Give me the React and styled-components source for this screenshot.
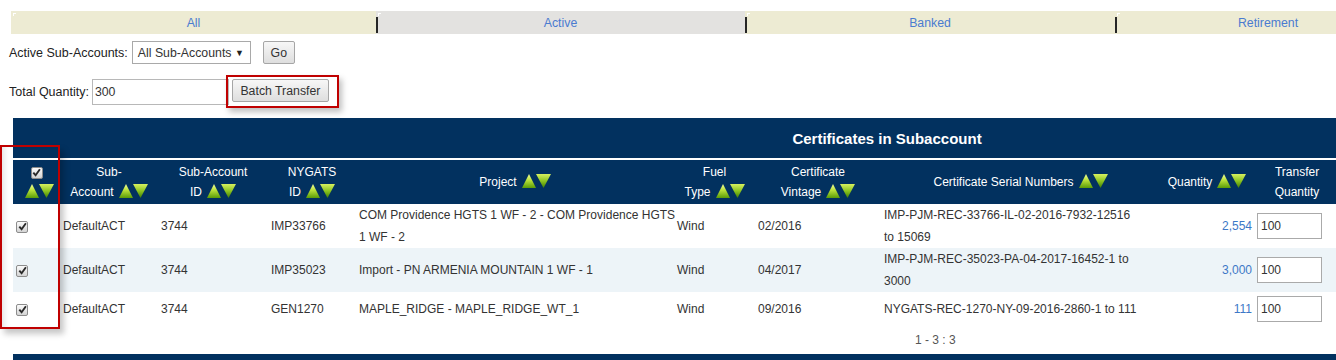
import React from "react";
import styled, { createGlobalStyle } from "styled-components";

const GlobalStyle = createGlobalStyle`
  body {
    margin: 0;
    font-family: "Liberation Sans", Arial, sans-serif;
    font-size: 12px;
    color: #333;
    background: #fff;
    overflow: hidden;
  }
`;

const NAVY = "#02315f";
const LINK = "#4a7bd0";

const tabs = [
  { label: "All", width: 365 },
  { label: "Active", width: 369, active: true },
  { label: "Banked", width: 370 },
  { label: "Retirement", width: 306 },
];

const columns = [
  { key: "cb", width: 47 },
  { key: "sub", width: 98, lines: ["Sub-", "Account"] },
  { key: "id", width: 110, lines: ["Sub-Account", "ID"] },
  { key: "nygats", width: 88, lines: ["NYGATS", "ID"] },
  { key: "project", width: 318, lines: ["Project"] },
  { key: "fuel", width: 81, lines: ["Fuel", "Type"] },
  { key: "vintage", width: 126, lines: ["Certificate", "Vintage"] },
  { key: "serial", width: 279, lines: ["Certificate Serial Numbers"] },
  { key: "qty", width: 94, lines: ["Quantity"] },
  { key: "transfer", width: 86, lines: ["Transfer", "Quantity"], noSort: true },
];

const rows = [
  {
    sub: "DefaultACT",
    id: "3744",
    nygats: "IMP33766",
    project: "COM Providence HGTS 1 WF - 2 - COM Providence HGTS 1 WF - 2",
    fuel: "Wind",
    vintage: "02/2016",
    serial: "IMP-PJM-REC-33766-IL-02-2016-7932-12516 to 15069",
    qty: "2,554",
    transfer: "100",
  },
  {
    sub: "DefaultACT",
    id: "3744",
    nygats: "IMP35023",
    project: "Import - PN ARMENIA MOUNTAIN 1 WF - 1",
    fuel: "Wind",
    vintage: "04/2017",
    serial: "IMP-PJM-REC-35023-PA-04-2017-16452-1 to 3000",
    qty: "3,000",
    transfer: "100",
  },
  {
    sub: "DefaultACT",
    id: "3744",
    nygats: "GEN1270",
    project: "MAPLE_RIDGE - MAPLE_RIDGE_WT_1",
    fuel: "Wind",
    vintage: "09/2016",
    serial: "NYGATS-REC-1270-NY-09-2016-2860-1 to 111",
    qty: "111",
    transfer: "100",
  },
];

function SortArrows() {
  return (
    <Arrows width="29" height="14" viewBox="0 0 29 14">
      <defs>
        <linearGradient id="upg" x1="0" y1="0" x2="0" y2="1">
          <stop offset="0" stopColor="#f2ff9a" />
          <stop offset="0.45" stopColor="#b8e03a" />
          <stop offset="1" stopColor="#5a9c08" />
        </linearGradient>
        <linearGradient id="dng" x1="0" y1="0" x2="0" y2="1">
          <stop offset="0" stopColor="#d6f060" />
          <stop offset="0.5" stopColor="#8cc420" />
          <stop offset="1" stopColor="#3f7e04" />
        </linearGradient>
      </defs>
      <polygon points="0,14 7,0 14,14" fill="url(#upg)" />
      <polygon points="14,0 29,0 21.5,14" fill="url(#dng)" />
    </Arrows>
  );
}

function CheckBox() {
  return (
    <Check>
      <svg width="9" height="9" viewBox="0 0 9 9">
        <path d="M1.3 4.6 L3.6 7.2 L7.9 1.3" fill="none" stroke="#2a2a2a" strokeWidth="1.9" />
      </svg>
    </Check>
  );
}

export default function App() {
  return (
    <Page>
      <GlobalStyle />
      <TabBar>
        {tabs.map((t, i) => (
          <Tab key={t.label} $w={t.width} $active={t.active} $divider={i > 0}>
            {t.label}
          </Tab>
        ))}
      </TabBar>

      <ControlRow>
        <Label>Active Sub-Accounts:</Label>
        <FakeSelect>
          <span>All Sub-Accounts</span>
          <Caret>▼</Caret>
        </FakeSelect>
        <Button $ml={12} $w={32}>Go</Button>
      </ControlRow>

      <ControlRow $mt={11}>
        <Label>Total Quantity:</Label>
        <QtyInput defaultValue="300" />
        <Highlight>
          <Button $w={97}>Batch Transfer</Button>
        </Highlight>
      </ControlRow>

      <Grid>
        <colgroup>
          {columns.map((c) => (
            <col key={c.key} style={{ width: c.width }} />
          ))}
        </colgroup>
        <thead>
          <tr>
            <TitleCell colSpan={columns.length}>Certificates in Subaccount</TitleCell>
          </tr>
          <tr>
            {columns.map((c) =>
              c.key === "cb" ? (
                <HeadCell key={c.key}>
                  <CheckBox />
                  <br />
                  <SortArrows />
                </HeadCell>
              ) : (
                <HeadCell key={c.key}>
                  {c.lines.map((l, i) => (
                    <React.Fragment key={l}>
                      {i > 0 && <br />}
                      {l}
                    </React.Fragment>
                  ))}
                  {!c.noSort && <SortArrows />}
                </HeadCell>
              )
            )}
          </tr>
        </thead>
        <tbody>
          {rows.map((r, i) => (
            <Row key={r.nygats} $alt={i % 2 === 1}>
              <Cell><CheckBox /></Cell>
              <Cell>{r.sub}</Cell>
              <Cell>{r.id}</Cell>
              <Cell>{r.nygats}</Cell>
              <Cell><Wrap $w={320}>{r.project}</Wrap></Cell>
              <Cell>{r.fuel}</Cell>
              <Cell>{r.vintage}</Cell>
              <Cell><Wrap $w={258}>{r.serial}</Wrap></Cell>
              <Cell $right><QtyLink>{r.qty}</QtyLink></Cell>
              <Cell><TransferInput defaultValue={r.transfer} /></Cell>
            </Row>
          ))}
        </tbody>
      </Grid>
      <Pager>1 - 3 : 3</Pager>
      <FooterBar />

      <ColumnHighlight />
    </Page>
  );
}

const Page = styled.div`
  position: relative;
  width: 1336px;
  padding: 11px 0 0 9px;
  box-sizing: border-box;
`;

const TabBar = styled.div`
  display: flex;
  margin-left: 2px;
  height: 23px;
  white-space: nowrap;
`;

const Tab = styled.div`
  position: relative;
  flex: 0 0 ${(p) => p.$w}px;
  background: ${(p) => (p.$active ? "#e3e2e0" : "#edebd3")};
  color: ${LINK};
  text-align: center;
  line-height: 24px;
  font-size: 12.3px;

  &::before {
    content: "";
    display: ${(p) => (p.$divider ? "block" : "none")};
    position: absolute;
    left: 0;
    top: 6px;
    bottom: 1px;
    width: 1.5px;
    background: #262626;
  }

  &::after {
    content: "";
    position: absolute;
    left: 2px;
    top: 2px;
    width: 2px;
    height: 2px;
    border-top: 1px solid #fff;
    border-left: 1px solid #fff;
  }
`;

const ControlRow = styled.div`
  display: flex;
  align-items: center;
  margin-top: ${(p) => p.$mt || 7}px;
`;

const Label = styled.span`
  font-size: 12.5px;
  color: #222;
  margin-right: 3px;
`;

const FakeSelect = styled.div`
  display: flex;
  align-items: center;
  justify-content: space-between;
  box-sizing: border-box;
  width: 119px;
  height: 23px;
  margin-left: 1px;
  padding: 0 6px 0 5px;
  border: 1px solid #a9a9a9;
  background: #fff;
  color: #333;
  font-size: 12.3px;
`;

const Caret = styled.span`
  font-size: 9px;
  color: #222;
`;

const Button = styled.button`
  box-sizing: border-box;
  width: ${(p) => p.$w}px;
  height: 23px;
  margin-left: ${(p) => p.$ml || 0}px;
  padding: 0;
  border: 1px solid #a6a6a6;
  border-radius: 2px;
  background: linear-gradient(#f7f7f7, #dedede);
  font-family: "Liberation Sans", Arial, sans-serif;
  font-size: 12.3px;
  color: #333;
`;

const QtyInput = styled.input`
  box-sizing: border-box;
  width: 137px;
  height: 26px;
  padding: 0 2px;
  border: 1px solid #b8b8b8;
  font-family: "Liberation Sans", Arial, sans-serif;
  font-size: 12.3px;
  color: #333;
  outline: none;
`;

const Highlight = styled.div`
  display: flex;
  margin-left: -3px;
  padding: 2px 8px 4px 4px;
  border: 2px solid #c00000;
  box-shadow: 3px 4px 6px rgba(0, 0, 0, 0.25);
`;

const Grid = styled.table`
  margin: 10px 0 0 4px;
  width: 1327px;
  table-layout: fixed;
  border-collapse: collapse;
  border-spacing: 0;
`;

const TitleCell = styled.th`
  height: 40px;
  padding: 0 0 0 421px;
  background: ${NAVY};
  color: #fff;
  font-size: 15px;
  font-weight: bold;
  text-align: center;
  border-bottom: 2px solid #fff;
`;

const HeadCell = styled.th`
  height: 44px;
  box-sizing: border-box;
  padding: 2px 2px;
  background: ${NAVY};
  color: #fff;
  font-size: 12px;
  font-weight: normal;
  line-height: 20px;
  text-align: center;
  vertical-align: middle;
  white-space: nowrap;
`;

const Arrows = styled.svg`
  margin-left: 5px;
  vertical-align: -2px;
`;

const Check = styled.span`
  display: inline-flex;
  align-items: center;
  justify-content: center;
  box-sizing: border-box;
  width: 12px;
  height: 12px;
  border: 1px solid #8c8c8c;
  border-radius: 2px;
  background: linear-gradient(#fbfbfb, #d4d4d4);
  vertical-align: middle;
`;

const Row = styled.tr`
  background: ${(p) => (p.$alt ? "#edf4f8" : "#fff")};
`;

const Cell = styled.td`
  padding: 0 ${(p) => (p.$right ? 2 : 3)}px 0 3px;
  line-height: 22px;
  font-size: 12px;
  color: #333;
  vertical-align: middle;
  text-align: ${(p) => (p.$right ? "right" : "left")};
`;

const Wrap = styled.div`
  width: ${(p) => p.$w}px;
`;

const QtyLink = styled.span`
  color: #3d78c7;
`;

const TransferInput = styled.input`
  display: block;
  box-sizing: border-box;
  width: 65px;
  height: 26px;
  margin: 4px 0;
  padding: 0 3px;
  border: 1px solid #aaa;
  font-family: "Liberation Sans", Arial, sans-serif;
  font-size: 12px;
  color: #333;
  outline: none;
`;

const Pager = styled.div`
  height: 28px;
  line-height: 28px;
  padding-left: 906px;
  color: #555;
  font-size: 12px;
`;

const FooterBar = styled.div`
  margin-left: 4px;
  width: 1327px;
  height: 20px;
  background: ${NAVY};
`;

const ColumnHighlight = styled.div`
  position: absolute;
  left: 0;
  top: 145px;
  width: 60px;
  height: 184px;
  box-sizing: border-box;
  border: 2px solid #c00000;
  box-shadow: 4px 5px 6px rgba(0, 0, 0, 0.22), inset 6px 0 6px -4px rgba(0, 0, 0, 0.12);
  pointer-events: none;
`;
